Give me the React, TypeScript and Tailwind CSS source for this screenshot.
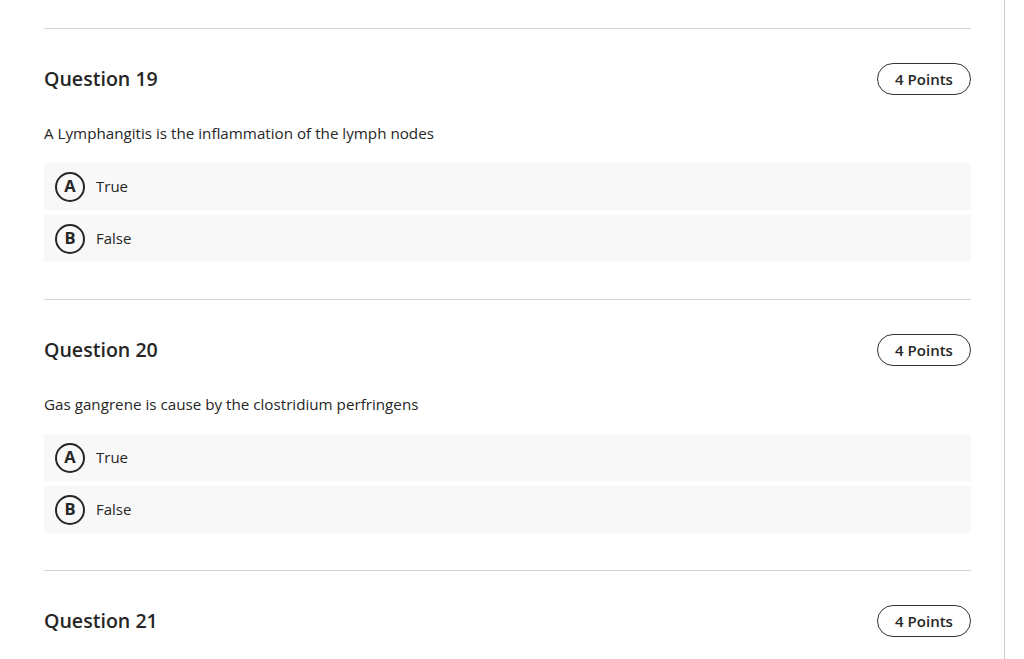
const questions = [
  { n: 19, text: 'A Lymphangitis is the inflammation of the lymph nodes', options: ['True', 'False'] },
  { n: 20, text: 'Gas gangrene is cause by the clostridium perfringens', options: ['True', 'False'] },
  { n: 21, text: 'Cellulitis is a spreading infection of the skin', options: ['True', 'False'] },
]

function Option({ letter, label }: { letter: string; label: string }) {
  return (
    <div className="flex h-[47px] items-center bg-[#f8f8f8] pl-[11px]">
      <span className="flex h-[30px] w-[30px] items-center justify-center rounded-full border-2 border-[#262626] text-[16.5px] font-bold text-[#262626]">
        {letter}
      </span>
      <span className="ml-[11px] text-[15px] font-medium text-[#262626]">{label}</span>
    </div>
  )
}

export default function App() {
  return (
    <div className="h-[659px] overflow-hidden bg-white" style={{ fontFamily: '"Open Sans", sans-serif' }}>
      <div className="min-h-full w-[1005px] border-r border-[#cdcdcd] pt-[28px] pl-[44px] pr-[33px]">
        {questions.map((q) => (
          <section key={q.n} className="border-t border-[#d4d4d4] pt-[34px] pb-[37px]">
            <div className="flex h-[32px] items-center justify-between">
              <h2 className="text-[19.6px] font-semibold text-[#262626]">Question {q.n}</h2>
              <span className="flex h-[32px] w-[94px] items-center justify-center rounded-full border border-[#333] text-[15px] font-semibold text-[#262626]">
                4 Points
              </span>
            </div>
            <p className="mt-[27px] text-[15.2px] leading-[22px] text-[#262626]">{q.text}</p>
            <div className="mt-[19px] flex flex-col gap-[5px]">
              {q.options.map((o, i) => (
                <Option key={o} letter={String.fromCharCode(65 + i)} label={o} />
              ))}
            </div>
          </section>
        ))}
      </div>
    </div>
  )
}
